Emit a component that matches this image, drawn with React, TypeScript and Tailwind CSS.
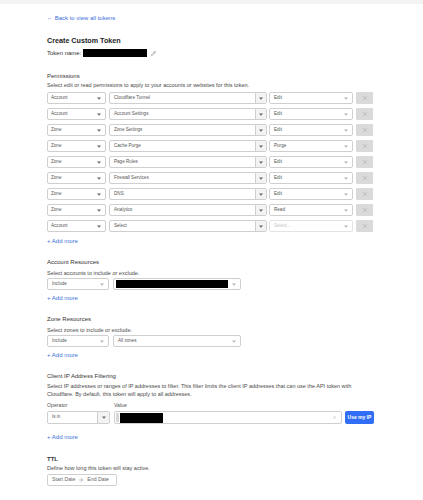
import React from 'react';
import { X, Pencil, ArrowRight } from 'lucide-react';

const rows = [
  { scope: 'Account', item: 'Cloudflare Tunnel', level: 'Edit' },
  { scope: 'Account', item: 'Account Settings', level: 'Edit' },
  { scope: 'Zone', item: 'Zone Settings', level: 'Edit' },
  { scope: 'Zone', item: 'Cache Purge', level: 'Purge' },
  { scope: 'Zone', item: 'Page Rules', level: 'Edit' },
  { scope: 'Zone', item: 'Firewall Services', level: 'Edit' },
  { scope: 'Zone', item: 'DNS', level: 'Edit' },
  { scope: 'Zone', item: 'Analytics', level: 'Read' },
  { scope: 'Account', item: 'Select', level: '' },
];

const Caret = ({ light = false }: { light?: boolean }) => (
  <svg width="4" height="3" viewBox="0 0 4 3" className="shrink-0">
    <path d="M0 0.5 L4 0.5 L2 2.8 Z" fill={light ? '#b5b5b5' : '#666'} />
  </svg>
);

const AddMore = ({ className }: { className: string }) => (
  <div className={`text-[6px] leading-[8px] text-[#3a6fd8] ${className}`}>+ Add more</div>
);

const Title = ({ children, className }: { children: React.ReactNode; className: string }) => (
  <div className={`text-[6px] leading-[8px] text-[#333] ${className}`}>{children}</div>
);

const Desc = ({ children, className }: { children: React.ReactNode; className: string }) => (
  <div className={`text-[5.5px] leading-[6px] text-[#4a4a4a] ${className}`}>{children}</div>
);

const App = () => {
  return (
    <div className="w-[423px] h-[500px] bg-white overflow-hidden" style={{ fontFamily: '"Liberation Sans", Arial, sans-serif' }}>
      <div className="h-[4px] bg-[#f3f3f3]" />
      <div className="ml-[47px] w-[330px]">
        <div className="mt-[10px] text-[6px] leading-[8px] text-[#3a6fd8]">← Back to view all tokens</div>
        <div className="mt-[14px] text-[7.2px] leading-[10px] font-bold text-[#222]">Create Custom Token</div>
        <div className="mt-[3px] flex items-center h-[8px] text-[6px] text-[#333]">
          <span>Token name:</span>
          <div className="ml-[2px] w-[64px] h-[8px] bg-black" />
          <Pencil className="ml-[4px] w-[5px] h-[5px] text-[#666]" strokeWidth={2} />
        </div>

        <Title className="mt-[15px]">Permissions</Title>
        <Desc className="mt-[2px]">Select edit or read permissions to apply to your accounts or websites for this token.</Desc>
        <div className="mt-[4px] flex flex-col gap-[4px]">
          {rows.map((r, i) => (
            <div key={i} className="flex h-[12px] text-[4.6px] text-[#555]">
              <div className="w-[59px] shrink-0 flex items-center justify-between pl-[3px] pr-[4px] border border-[#cfcfcf] rounded-[2px]">
                <span>{r.scope}</span>
                <Caret />
              </div>
              <div className="ml-[3px] w-[158px] shrink-0 flex border border-[#cfcfcf] rounded-[2px]">
                <div className="flex-1 flex items-center pl-[4px]">{r.item}</div>
                <div className="w-[11px] flex items-center justify-center border-l border-[#cfcfcf] bg-[#f3f3f3]">
                  <Caret />
                </div>
              </div>
              <div className={`ml-[2px] w-[84px] shrink-0 flex items-center justify-between pl-[4px] pr-[4px] border rounded-[2px] ${r.level ? 'border-[#cfcfcf]' : 'border-[#e3e3e3]'}`}>
                <span className={r.level ? '' : 'text-[#c4c4c4]'}>{r.level || 'Select...'}</span>
                <Caret light />
              </div>
              <div className="ml-[3px] w-[17px] shrink-0 flex items-center justify-center bg-[#dadada] rounded-[1px]">
                <X className="w-[6px] h-[6px] text-[#8a8a8a]" strokeWidth={1.5} />
              </div>
            </div>
          ))}
        </div>
        <AddMore className="mt-[5px]" />

        <Title className="mt-[13px]">Account Resources</Title>
        <Desc className="mt-[4px]">Select accounts to include or exclude.</Desc>
        <div className="mt-[2px] flex h-[12px] text-[4.6px] text-[#555]">
          <div className="w-[62px] flex items-center justify-between pl-[4px] pr-[4px] border border-[#cfcfcf] rounded-[2px]">
            <span>Include</span>
            <Caret light />
          </div>
          <div className="ml-[4px] w-[128px] flex items-center border border-[#cfcfcf] rounded-[2px] pl-[2px] pr-[4px]">
            <div className="flex-1 h-[8px] bg-black" />
            <div className="ml-[4px]"><Caret light /></div>
          </div>
        </div>
        <AddMore className="mt-[4px]" />

        <Title className="mt-[13px]">Zone Resources</Title>
        <Desc className="mt-[4px]">Select zones to include or exclude.</Desc>
        <div className="mt-[2px] flex h-[12px] text-[4.6px] text-[#555]">
          <div className="w-[62px] flex items-center justify-between pl-[4px] pr-[4px] border border-[#cfcfcf] rounded-[2px]">
            <span>Include</span>
            <Caret light />
          </div>
          <div className="ml-[4px] w-[128px] flex items-center justify-between border border-[#cfcfcf] rounded-[2px] pl-[4px] pr-[4px]">
            <span>All zones</span>
            <Caret light />
          </div>
        </div>
        <AddMore className="mt-[4px]" />

        <Title className="mt-[13px]">Client IP Address Filtering</Title>
        <div className="mt-[2px] w-[322px] text-[5.5px] leading-[8px] text-[#4a4a4a]">
          Select IP addresses or ranges of IP addresses to filter. This filter limits the client IP addresses that can use the API token with Cloudflare. By default, this token will apply to all addresses.
        </div>
        <div className="mt-[4px] flex text-[5.2px] leading-[6px] text-[#555]">
          <div className="w-[67px]">Operator</div>
          <div>Value</div>
        </div>
        <div className="mt-[3px] flex h-[13px] text-[4.6px] text-[#555]">
          <div className="w-[63px] shrink-0 flex border border-[#cfcfcf] rounded-[2px]">
            <div className="flex-1 flex items-center pl-[4px]">Is in</div>
            <div className="w-[12px] flex items-center justify-center border-l border-[#cfcfcf] bg-[#f3f3f3]">
              <Caret />
            </div>
          </div>
          <div className="ml-[4px] w-[228px] shrink-0 flex items-end border border-[#cfcfcf] rounded-[2px] pl-[1px] pr-[4px]">
            <div className="w-[3px] h-[9px] bg-[#d8d8d8] self-center" />
            <div className="ml-[1px] w-[43px] h-[10px] bg-black" />
            <div className="flex-1" />
            <X className="self-center w-[5px] h-[5px] text-[#999]" strokeWidth={1.5} />
          </div>
          <div className="ml-[3px] w-[29px] shrink-0 flex items-center justify-center bg-[#2f6ef5] rounded-[2px] text-white text-[5px] font-semibold">
            Use my IP
          </div>
        </div>
        <AddMore className="mt-[9px]" />

        <div className="mt-[14px] text-[6px] leading-[8px] font-bold text-[#333]">TTL</div>
        <Desc className="mt-[2px]">Define how long this token will stay active.</Desc>
        <div className="mt-[3px] w-[70px] h-[12px] flex items-center pl-[4px] gap-[3px] border border-[#cfcfcf] rounded-[2px] text-[5.2px] text-[#666]">
          <span>Start Date</span>
          <ArrowRight className="w-[6px] h-[6px] text-[#666]" strokeWidth={1.5} />
          <span>End Date</span>
        </div>
      </div>
    </div>
  );
};

export default App;
